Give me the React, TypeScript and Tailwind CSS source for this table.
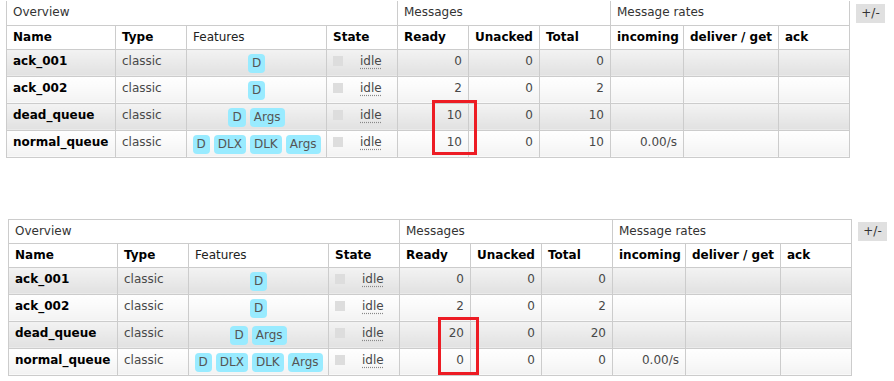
import React from "react";

type Row = {
  name: string;
  features: string[];
  ready: string;
  unacked: string;
  total: string;
  incoming: string;
};

const rows1: Row[] = [
  { name: "ack_001", features: ["D"], ready: "0", unacked: "0", total: "0", incoming: "" },
  { name: "ack_002", features: ["D"], ready: "2", unacked: "0", total: "2", incoming: "" },
  { name: "dead_queue", features: ["D", "Args"], ready: "10", unacked: "0", total: "10", incoming: "" },
  { name: "normal_queue", features: ["D", "DLX", "DLK", "Args"], ready: "10", unacked: "0", total: "10", incoming: "0.00/s" },
];

const rows2: Row[] = [
  { name: "ack_001", features: ["D"], ready: "0", unacked: "0", total: "0", incoming: "" },
  { name: "ack_002", features: ["D"], ready: "2", unacked: "0", total: "2", incoming: "" },
  { name: "dead_queue", features: ["D", "Args"], ready: "20", unacked: "0", total: "20", incoming: "" },
  { name: "normal_queue", features: ["D", "DLX", "DLK", "Args"], ready: "0", unacked: "0", total: "0", incoming: "0.00/s" },
];

const cell = "border border-[#cccccc] align-top pt-[4px] leading-[15px] px-[6px] whitespace-nowrap";

const headers: { label: string; bold: boolean }[] = [
  { label: "Name", bold: true },
  { label: "Type", bold: true },
  { label: "Features", bold: false },
  { label: "State", bold: true },
  { label: "Ready", bold: true },
  { label: "Unacked", bold: true },
  { label: "Total", bold: true },
  { label: "incoming", bold: true },
  { label: "deliver / get", bold: true },
  { label: "ack", bold: true },
];

function QueueTable({ rows, noTop }: { rows: Row[]; noTop?: boolean }) {
  const top = noTop ? "border-t-0" : "";
  return (
    <table className="border-collapse table-fixed w-[844px] text-[12px]">
      <colgroup>
        <col className="w-[109px]" />
        <col className="w-[71px]" />
        <col className="w-[140px]" />
        <col className="w-[71px]" />
        <col className="w-[71px]" />
        <col className="w-[71px]" />
        <col className="w-[71px]" />
        <col className="w-[73px]" />
        <col className="w-[95px]" />
        <col className="w-[71px]" />
      </colgroup>
      <thead>
        <tr>
          <th colSpan={4} className={`${cell} ${top} h-[24px] text-left font-normal text-[#333] bg-white`}>Overview</th>
          <th colSpan={3} className={`${cell} ${top} h-[24px] text-left font-normal text-[#333] bg-white`}>Messages</th>
          <th colSpan={3} className={`${cell} ${top} h-[24px] text-left font-normal text-[#333] bg-white`}>Message rates</th>
        </tr>
        <tr>
          {headers.map((h) => (
            <th
              key={h.label}
              className={`${cell} h-[24px] text-left ${h.bold ? "font-bold text-black" : "font-normal text-[#222]"} bg-white`}
            >
              {h.label}
            </th>
          ))}
        </tr>
      </thead>
      <tbody>
        {rows.map((r, i) => {
          const bg =
            i % 2 === 0
              ? "bg-linear-to-b from-[#f3f3f3] to-[#e1e1e1]"
              : "bg-linear-to-b from-[#ffffff] to-[#f3f3f3]";
          const c = `${cell} ${bg} h-[27px]`;
          return (
            <tr key={r.name}>
              <td className={`${c} font-bold text-black`}>{r.name}</td>
              <td className={`${c} text-[#484848]`}>classic</td>
              <td className={`${cell} ${bg} h-[27px] pt-[2px] text-center`}>
                <div className="flex justify-center gap-[4px]">
                  {r.features.map((f, k) => (
                    <span
                      key={k}
                      className="h-[19px] leading-[19px] px-[4px] rounded-[4px] bg-[#99ebff] text-[#555]"
                    >
                      {f}
                    </span>
                  ))}
                </div>
              </td>
              <td className={`${c} text-[#484848]`}>
                <div className="flex items-start">
                  <span className="mt-[2px] w-[10px] h-[10px] bg-[#dddddd] shrink-0" />
                  <span className="ml-[17px] underline decoration-dotted decoration-[#888] underline-offset-[3px]">idle</span>
                </div>
              </td>
              <td className={`${c} text-right text-[#484848]`}>{r.ready}</td>
              <td className={`${c} text-right text-[#484848]`}>{r.unacked}</td>
              <td className={`${c} text-right text-[#484848]`}>{r.total}</td>
              <td className={`${c} text-right text-[#484848]`}>{r.incoming}</td>
              <td className={c}></td>
              <td className={c}></td>
            </tr>
          );
        })}
      </tbody>
    </table>
  );
}

function Toggle() {
  return (
    <div className="mt-[3px] w-[29px] h-[19px] leading-[19px] bg-[#e0e0e0] text-[#333] text-[12px] text-center">
      +/-
    </div>
  );
}

export default function App() {
  return (
    <div className="relative w-[894px] h-[381px] bg-white overflow-hidden font-['DejaVu_Sans',sans-serif] text-[12px]">
      <div className="pt-[1px] pl-[6px] flex items-start gap-[6px]">
        <QueueTable rows={rows1} noTop />
        <Toggle />
      </div>
      <div className="mt-[61px] pl-[8px] flex items-start gap-[6px]">
        <QueueTable rows={rows2} />
        <Toggle />
      </div>
      <div className="absolute left-[432px] top-[100px] w-[45px] h-[55px] border-[3px] border-[#ed1c24]" />
      <div className="absolute left-[438px] top-[317px] w-[41px] h-[58px] border-[3px] border-[#ed1c24]" />
    </div>
  );
}
